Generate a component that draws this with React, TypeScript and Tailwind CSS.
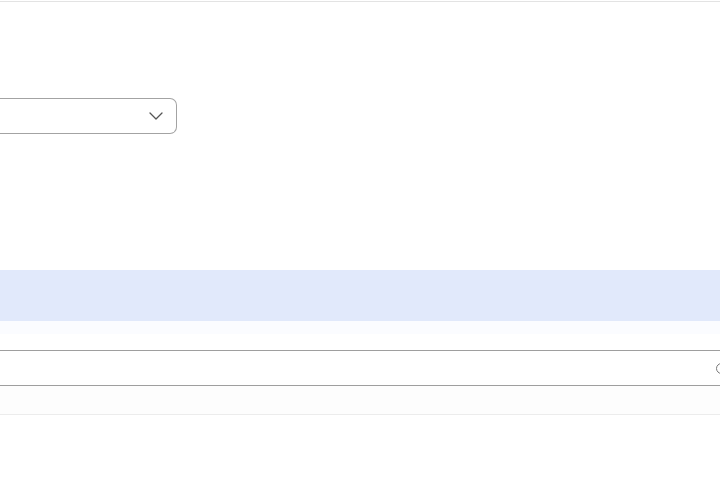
import { ChevronDown } from "lucide-react";

export default function App() {
  return (
    <div
      className="w-[720px] h-[480px] overflow-hidden bg-white"
      style={{ fontFamily: "'Liberation Sans', Arial, sans-serif" }}
    >
      <div className="h-px mt-px bg-[#e3e3e3]" />

      <div className="pt-[96px]">
        <div className="flex items-center justify-end w-[177px] h-[36px] border border-l-0 border-[#a3a3a3] rounded-r-[7px] pr-[8px]">
          <ChevronDown className="w-6 h-6 text-[#555]" strokeWidth={1.3} />
        </div>
      </div>

      <div className="mt-[136px] h-[51px] bg-[#e1e9fb]" />
      <div className="h-[13px] bg-[#fbfcff]" />

      <div className="mt-[16px] flex items-center h-[36px] border-y border-[#9e9e9e] overflow-hidden">
        <div className="flex-1" />
        <div className="w-[4px] overflow-hidden">
          <div className="w-[11px] h-[11px] rounded-full border-[1.5px] border-[#777]" />
        </div>
      </div>
      <div className="h-[29px] bg-[#fdfdfd] border-b border-[#ececec]" />
    </div>
  );
}
